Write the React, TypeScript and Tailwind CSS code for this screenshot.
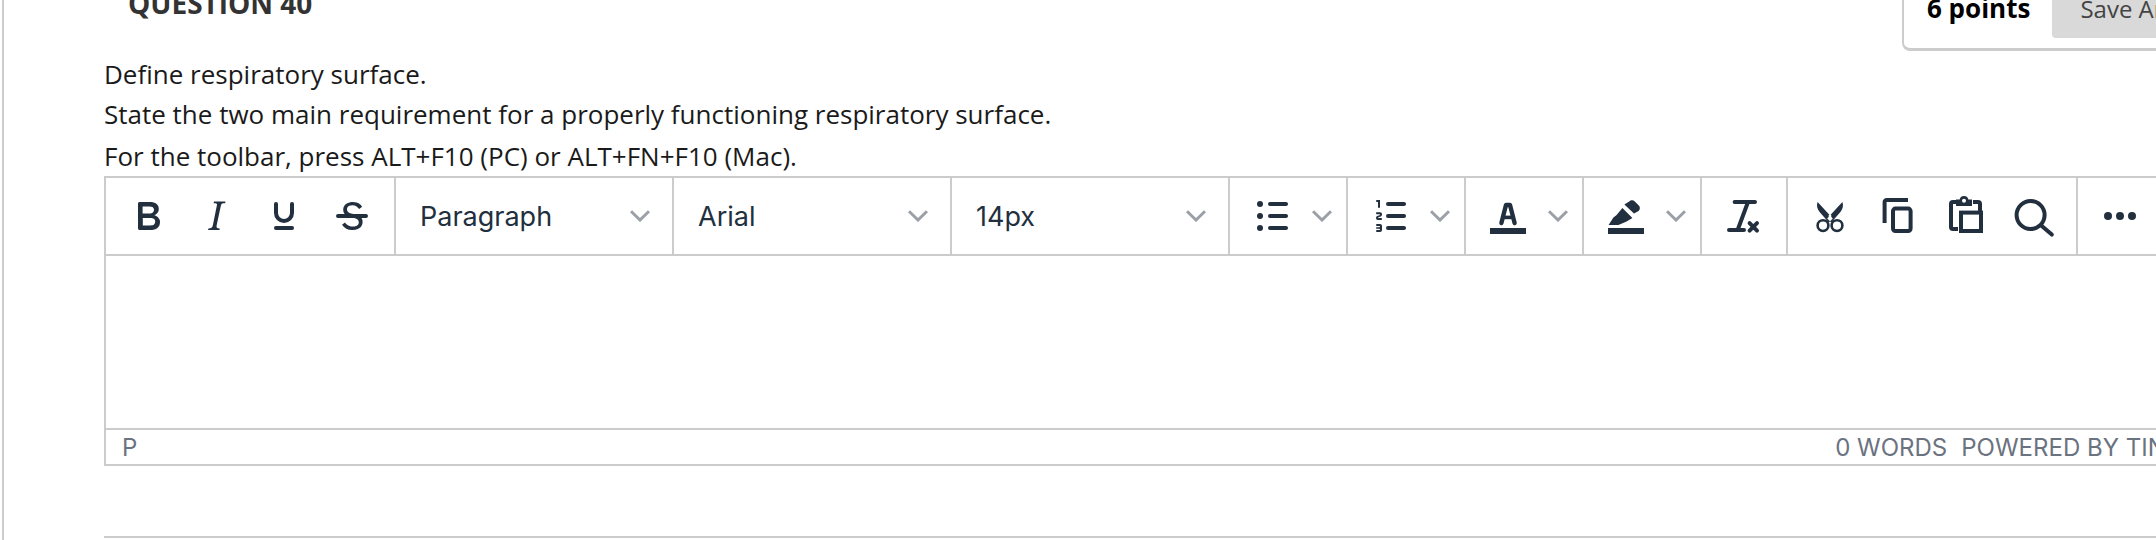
import React from "react";

const ink = "#222f3e";

function Icon({ children }: { children: React.ReactNode }) {
  return (
    <svg width="48" height="48" viewBox="0 0 24 24" fill={ink} className="shrink-0">
      {children}
    </svg>
  );
}

function Chevron() {
  return (
    <svg width="20" height="12" viewBox="0 0 20 12" fill="none" className="shrink-0">
      <path d="M1 1.2 10 10l9-8.8" stroke="#9aa0a6" strokeWidth="3" />
    </svg>
  );
}

function Select({ label }: { label: string }) {
  return (
    <div className="flex items-center justify-between w-[278px] h-full pl-6 pr-[22px] border-r-2 border-[#cccccc] text-[27px] text-[#222f3e]">
      <span className="pt-[2px]">{label}</span>
      <Chevron />
    </div>
  );
}

function Split({ children }: { children: React.ReactNode }) {
  return (
    <div className="flex items-center w-[118px] h-full pl-[18px] gap-4 border-r-2 border-[#cccccc]">
      {children}
      <Chevron />
    </div>
  );
}

const line = { fill: "none", stroke: ink, strokeWidth: 2, strokeLinecap: "round" as const, strokeLinejoin: "round" as const };

export default function App() {
  return (
    <div className="w-[2156px] h-[540px] overflow-hidden bg-white" style={{ fontFamily: '"Open Sans", sans-serif' }}>
      <div className="ml-[2px] h-full border-l-2 border-[#cccccc] pl-[100px]">
        {/* Question header, scrolled partly off the top */}
        <div className="flex justify-between items-start h-[51px]">
          <h2 className="ml-6 -mt-[15px] text-[28px] leading-[36px] font-bold text-[#333333]">QUESTION 40</h2>
          <div className="flex w-[260px] h-[51px] mr-[-6px] border-l-2 border-b-[3px] border-[#cccccc] rounded-bl-lg">
            <span className="ml-[23px] -mt-[10px] text-[26px] leading-[36px] font-bold text-black whitespace-nowrap">6 points</span>
            <div className="ml-[22px] w-[110px] h-[38px] bg-[#d9d9d9] rounded-bl pl-7 text-[24px] leading-[18px] text-[#444444] whitespace-nowrap overflow-hidden">
              Save Answer
            </div>
          </div>
        </div>

        {/* Prompt */}
        <div className="text-[26px] text-[#1a1a1a]">
          <p className="h-[40px] leading-[40px] mt-[3px]">Define respiratory surface.</p>
          <p className="h-[40px] leading-[40px]">State the two main requirement for a properly functioning respiratory surface.</p>
          <p className="h-[42px] leading-[44px]">For the toolbar, press ALT+F10 (PC) or ALT+FN+F10 (Mac).</p>
        </div>

        {/* Editor */}
        <div className="w-[2100px] border-2 border-[#cccccc]" style={{ fontFamily: "Inter, sans-serif" }}>
          <div className="flex h-[78px] border-b-2 border-[#cccccc]">
            <div className="flex items-center w-[290px] h-full pl-[18px] gap-5 border-r-2 border-[#cccccc]">
              <Icon>
                <path d="M7.800 19c-.3 0-.5 0-.6-.2l-.2-.5V5.700c0-.2 0-.4.2-.5l.6-.2h5c1.500 0 2.700.3 3.500 1 .7.6 1.100 1.400 1.100 2.500a3 3 0 0 1-.6 1.900c-.4.6-1 1-1.600 1.200.4.1.9.3 1.300.6s.8.7 1 1.200c.4.4.5 1 .5 1.600 0 1.300-.4 2.300-1.300 3-.8.7-2.100 1-3.800 1H7.800zm5-8.300c.6 0 1.200-.1 1.600-.5.4-.3.6-.7.6-1.300 0-1.100-.8-1.700-2.300-1.700H9.300v3.500h3.400zm.5 6c.7 0 1.300-.1 1.700-.4.4-.4.6-.9.6-1.500s-.2-1-.7-1.400c-.4-.3-1-.4-2-.4H9.400v3.800h4z" />
              </Icon>
              <Icon>
                <path d="M16.700 4.700l-.1.9h-.3c-.6 0-1 0-1.400.3-.3.3-.4.6-.5 1.100l-2.100 9.800v.6c0 .5.4.8 1.400.8h.2l-.2.8H8l.2-.8h.2c1.100 0 1.800-.5 2-1.500l2-9.800.1-.5c0-.6-.4-.8-1.400-.8h-.3l.2-.9h5.800z" />
              </Icon>
              <Icon>
                <path d="M8 6v4.500a4 4 0 0 0 8 0V6" {...line} />
                <rect x="7" y="17" width="10" height="2" rx="1" />
              </Icon>
              <Icon>
                <path d="M15.600 8.500c-.5-.7-1-1.100-1.300-1.300-.6-.4-1.300-.6-2-.6-2.700 0-2.800 1.700-2.800 2.100 0 1.600 1.800 2 3.200 2.300 4.400.9 4.600 2.800 4.600 3.900 0 1.400-.7 4.100-5 4.100A6.200 6.200 0 0 1 7 16.400l1.500-1.100c.4.6 1.600 2 3.700 2 1.600 0 2.500-.4 3-1.200.4-.8.3-2-.8-2.600-.7-.4-1.600-.7-2.900-1-1-.2-3.900-.8-3.900-3.600C7.600 6 10.300 5 12.400 5c2.900 0 4.200 1.600 4.700 2.400l-1.500 1.100zM5 11h14a1 1 0 0 1 0 2H5a1 1 0 0 1 0-2z" />
              </Icon>
            </div>
            <Select label="Paragraph" />
            <Select label="Arial" />
            <Select label="14px" />
            <Split>
              <Icon>
                <path d="M11 5h8c.6 0 1 .4 1 1s-.4 1-1 1h-8a1 1 0 0 1 0-2zm0 6h8c.6 0 1 .4 1 1s-.4 1-1 1h-8a1 1 0 0 1 0-2zm0 6h8c.6 0 1 .4 1 1s-.4 1-1 1h-8a1 1 0 0 1 0-2z" />
                <circle cx="6" cy="6" r="1.500" />
                <circle cx="6" cy="12" r="1.500" />
                <circle cx="6" cy="18" r="1.500" />
              </Icon>
            </Split>
            <Split>
              <Icon>
                <path d="M11 17h8c.6 0 1 .4 1 1s-.4 1-1 1h-8a1 1 0 0 1 0-2zm0-6h8c.6 0 1 .4 1 1s-.4 1-1 1h-8a1 1 0 0 1 0-2zm0-6h8c.6 0 1 .4 1 1s-.4 1-1 1h-8a1 1 0 1 1 0-2zM7 4v3.500c0 .3-.2.5-.5.5a.5.5 0 0 1-.5-.5V5h-.5a.5.5 0 0 1 0-1H7zm-1 8.800l.2.2h1.300c.3 0 .5.2.5.5s-.2.5-.5.5H5.900a1 1 0 0 1-.9-1V13c0-.4.3-.8.6-1l1.200-.4.2-.3a.2.2 0 0 0-.2-.2H5.500a.5.500 0 0 1-.5-.5c0-.3.2-.5.5-.5h1.600c.5 0 .9.4.9 1v.1c0 .4-.3.8-.6 1l-1.200.4-.2.3zM8 17v2c0 .6-.4 1-1 1H5.500a.5.5 0 0 1 0-1h1.200c.2 0 .3-.1.3-.3 0-.2-.1-.3-.3-.3H5.400a.4.4 0 1 1 0-.8h1.300c.2 0 .3-.1.3-.3 0-.2-.1-.3-.3-.3H5.500a.5.5 0 1 1 0-1H7c.6 0 1 .4 1 1z" />
              </Icon>
            </Split>
            <Split>
              <Icon>
                <path d="M3 18h18v3H3v-3z" />
                <path d="M8.700 15.500 11 6.500h2l2.300 9" fill="none" stroke={ink} strokeWidth="2.200" strokeLinecap="round" strokeLinejoin="round" />
                <path d="M9.400 12.700h5.200" fill="none" stroke={ink} strokeWidth="1.800" />
              </Icon>
            </Split>
            <Split>
              <Icon>
                <path d="M3 18h18v3H3v-3z" />
                <path d="M13.600 4.800c.7-.8 2-.9 2.800-.1l2 2c.8.8.7 2-.1 2.800L16 10.800l-4.800-4.500 2.400-1.500z" />
                <path d="M10.200 8 15.200 13l-2.900 1.800-4.100 1.700H3.300l2.400-3.800 1.600-1.200L10.200 8z" />
              </Icon>
            </Split>
            <div className="flex items-center w-[86px] h-full pl-[19px] border-r-2 border-[#cccccc]">
              <Icon>
                <path d="M4 19h7.500M8.500 18.500 13.500 5M6.800 5h10.200" {...line} />
                <path d="M14.300 15.600 18 19.300M18 15.600l-3.700 3.700" {...line} />
              </Icon>
            </div>
            <div className="flex items-center w-[290px] h-full pl-[18px] gap-5 border-r-2 border-[#cccccc]">
              <Icon>
                <circle cx="8.500" cy="16.800" r="2.700" fill="none" stroke={ink} strokeWidth="1.300" />
                <circle cx="15.500" cy="16.800" r="2.700" fill="none" stroke={ink} strokeWidth="1.300" />
                <path d="M5.800 5 13.400 13.200 11.400 15.200 6.800 10C5.500 8.500 5.200 6.500 5.800 5zM18.200 5 10.600 13.200 12.600 15.200 17.200 10C18.500 8.500 18.800 6.500 18.200 5z" />
                <circle cx="12" cy="12" r=".7" fill="#ffffff" />
              </Icon>
              <Icon>
                <path d="M17 3H6.300C5.200 3 4.300 3.900 4.300 5v10.500h2V5H17V3z" />
                <rect x="9.500" y="8.300" width="8.800" height="11.200" rx="1.200" fill="none" stroke={ink} strokeWidth="2" />
              </Icon>
              <Icon>
                <path d="M7 5H5.500a1 1 0 0 0-1 1v11.500a1 1 0 0 0 1 1H8M15.500 5h2.500a1 1 0 0 1 1 1v3.500" fill="none" stroke={ink} strokeWidth="2" />
                <path fillRule="evenodd" d="M11 2a2.300 2.300 0 0 1 2.200 1.700H15V7H7V3.700h1.800A2.300 2.300 0 0 1 11 2zm0 1.400a1 1 0 1 0 0 2 1 1 0 0 0 0-2z" />
                <rect x="9.500" y="10.300" width="10" height="9.200" fill="#ffffff" stroke={ink} strokeWidth="2" />
              </Icon>
              <Icon>
                <circle cx="10.300" cy="11.500" r="7" fill="none" stroke={ink} strokeWidth="2" />
                <path d="M15.600 16.800 20.900 21.300" {...line} />
              </Icon>
            </div>
            <div className="flex items-center pl-[18px]">
              <Icon>
                <path d="M6 10a2 2 0 1 1 0 4 2 2 0 0 1 0-4zm6 0a2 2 0 1 1 0 4 2 2 0 0 1 0-4zm6 0a2 2 0 1 1 0 4 2 2 0 0 1 0-4z" />
              </Icon>
            </div>
          </div>
          <div className="h-[174px] border-b-2 border-[#cccccc]" />
          <div className="flex items-center justify-between h-[34px] pl-4 pt-[2px] text-[24px] text-[#6b7280]">
            <span>P</span>
            <div className="flex gap-[14px] whitespace-nowrap pr-5">
              <span>0 WORDS</span>
              <span>POWERED BY TINY</span>
            </div>
          </div>
        </div>

        <div className="mt-[70px] w-[2100px] border-t-2 border-[#cccccc]" />
      </div>
    </div>
  );
}
